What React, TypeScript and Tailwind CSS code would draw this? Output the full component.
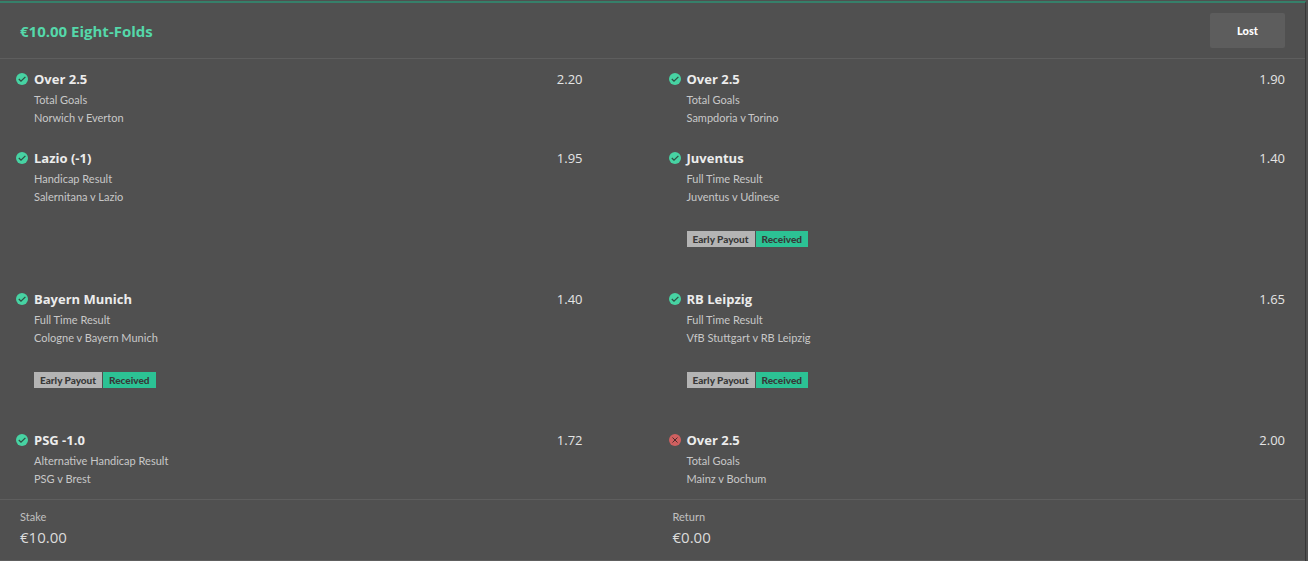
interface Selection {
  name: string;
  market: string;
  fixture: string;
  odds: string;
  won: boolean;
  earlyPayout?: boolean;
}

const selections: Selection[] = [
  { name: 'Over 2.5', market: 'Total Goals', fixture: 'Norwich v Everton', odds: '2.20', won: true },
  { name: 'Over 2.5', market: 'Total Goals', fixture: 'Sampdoria v Torino', odds: '1.90', won: true },
  { name: 'Lazio (-1)', market: 'Handicap Result', fixture: 'Salernitana v Lazio', odds: '1.95', won: true },
  { name: 'Juventus', market: 'Full Time Result', fixture: 'Juventus v Udinese', odds: '1.40', won: true, earlyPayout: true },
  { name: 'Bayern Munich', market: 'Full Time Result', fixture: 'Cologne v Bayern Munich', odds: '1.40', won: true, earlyPayout: true },
  { name: 'RB Leipzig', market: 'Full Time Result', fixture: 'VfB Stuttgart v RB Leipzig', odds: '1.65', won: true, earlyPayout: true },
  { name: 'PSG -1.0', market: 'Alternative Handicap Result', fixture: 'PSG v Brest', odds: '1.72', won: true },
  { name: 'Over 2.5', market: 'Total Goals', fixture: 'Mainz v Bochum', odds: '2.00', won: false },
];

function ResultIcon({ won }: { won: boolean }) {
  return (
    <svg viewBox="0 0 12 12" className="mt-1 h-3 w-3 shrink-0" role="img" aria-label={won ? 'Won' : 'Lost'}>
      <circle cx="6" cy="6" r="6" fill={won ? '#47d3a3' : '#cf6060'} />
      {won ? (
        <path d="M2.8 6 5 8.1 9.4 3.9" fill="none" stroke="#2f4f43" strokeWidth="1.3" />
      ) : (
        <path d="M3.5 3.5 8.5 8.5M8.5 3.5 3.5 8.5" fill="none" stroke="#4a2c2c" strokeWidth="1" />
      )}
    </svg>
  );
}

function EarlyPayoutBadge() {
  return (
    <div className="mt-[25px] mb-[21px] flex gap-px text-[10px] leading-4 font-black text-[#383838]">
      <span className="bg-[#b4b4b4] px-1.5">Early Payout</span>
      <span className="bg-[#2cc294] px-1.5">Received</span>
    </div>
  );
}

function SelectionItem({ selection }: { selection: Selection }) {
  return (
    <li className="flex gap-1.5 pt-2.5 pr-5 pb-[11px] pl-4 odd:pr-[70px]">
      <ResultIcon won={selection.won} />
      <div className="flex-1 text-[11px] leading-[18px] text-[#c8c8c8]">
        <h3 className="mb-0.5 font-['Open_Sans','Noto_Sans',sans-serif] text-[13px] leading-5 font-bold text-[#ececec]">{selection.name}</h3>
        <p>{selection.market}</p>
        <p>{selection.fixture}</p>
        {selection.earlyPayout && <EarlyPayoutBadge />}
      </div>
      <span className="font-['Open_Sans','Noto_Sans',sans-serif] text-[13px] leading-5 text-[#e4e4e4]">{selection.odds}</span>
    </li>
  );
}

function Total({ label, value }: { label: string; value: string }) {
  return (
    <div className="px-5 pt-2 pb-3">
      <dt className="text-[11px] leading-[18px] text-[#c0c0c0]">{label}</dt>
      <dd className="font-['Open_Sans','Noto_Sans',sans-serif] text-[15px] leading-[22px] text-[#dcdcdc]">{value}</dd>
    </div>
  );
}

export default function App() {
  return (
    <main className="min-h-screen bg-[#505050] pr-0.5 pt-px font-[Lato,sans-serif]">
      <article className="border-t-2 border-r border-t-[#36806a] border-r-[#383838]">
        <header className="flex items-center justify-between border-b border-[#5e5e5e] px-5 py-2.5">
          <h2 className="font-['Open_Sans','Noto_Sans',sans-serif] text-[15px] leading-5 font-bold text-[#55d8aa]">€10.00 Eight-Folds</h2>
          <button type="button" className="h-[35px] w-[75px] rounded-xs bg-[#5d5d5d] pt-0.5 text-[11px] font-black text-white">
            Lost
          </button>
        </header>
        <ul className="grid grid-cols-2">
          {selections.map(selection => (
            <SelectionItem key={selection.fixture} selection={selection} />
          ))}
        </ul>
        <dl className="grid grid-cols-2 border-y border-[#5e5e5e]">
          <Total label="Stake" value="€10.00" />
          <Total label="Return" value="€0.00" />
        </dl>
      </article>
    </main>
  );
}
